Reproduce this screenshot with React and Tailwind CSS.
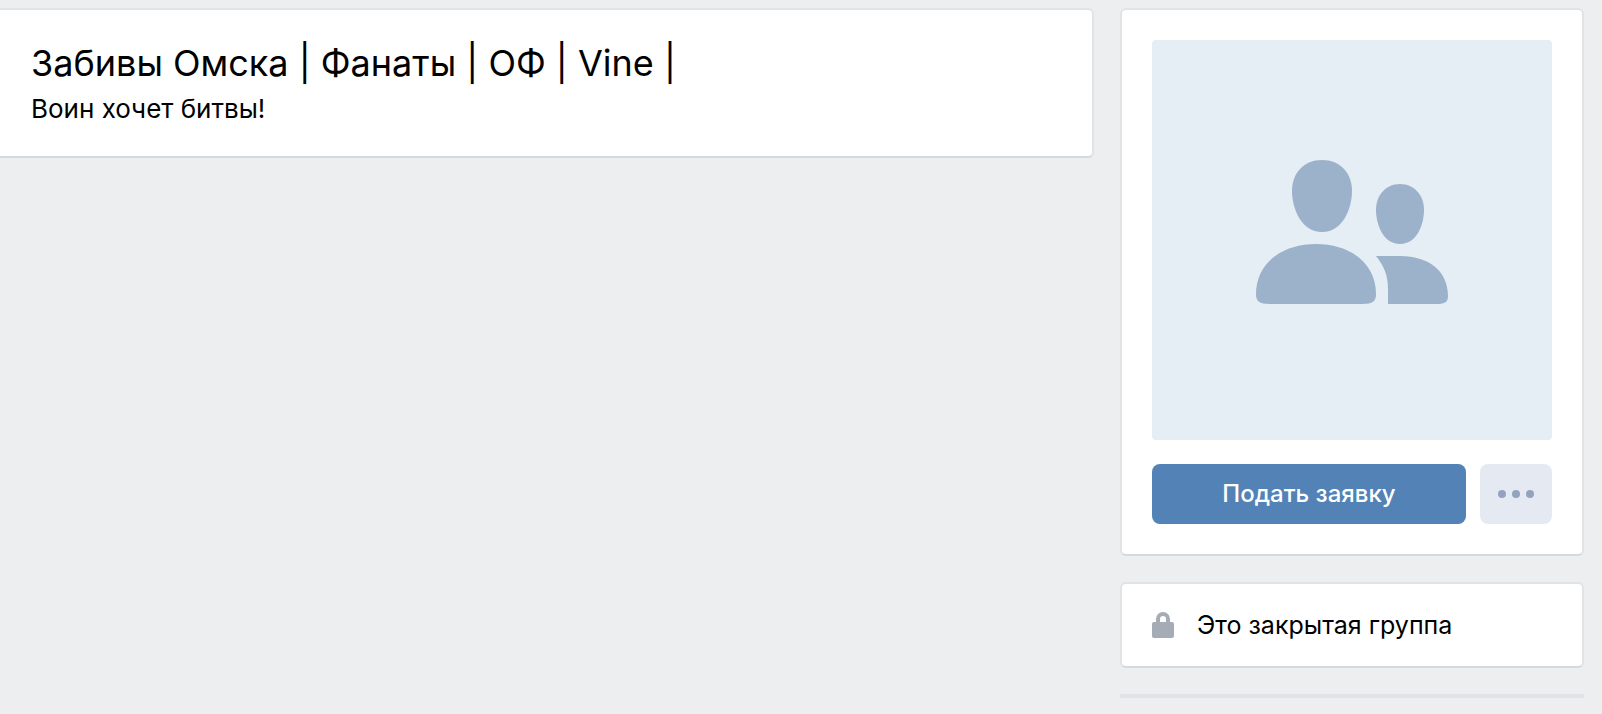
const CommunityIcon = () => (
  <svg className="w-48 h-36 mb-4" viewBox="0 0 192 144" fill="#9cb1ca" aria-hidden="true">
    <path d="M66 0C84 0 96 13 96 31C96 48 87 72 66 72C45 72 36 48 36 31C36 13 48 0 66 0Z" />
    <path d="M60 84C95 84 120 104 120 134C120 141 117 144 106 144H14C3 144 0 141 0 134C0 104 25 84 60 84Z" />
    <path d="M144 24C158 24 168 35 168 50C168 64 161 84 144 84C127 84 120 64 120 50C120 35 130 24 144 24Z" />
    <path d="M120 96H144C174 96 192 112 192 136C192 142 189 144 181 144H132V130C132 115 128 106 120 96Z" />
  </svg>
);

const LockIcon = () => (
  <svg className="w-[22px] h-[26px] shrink-0" viewBox="0 0 22 26" aria-hidden="true">
    <path d="M6 12V7a5 5 0 0 1 10 0v5" fill="none" stroke="#a5acb6" strokeWidth="4" />
    <rect y="10" width="22" height="16" rx="2" fill="#a5acb6" />
  </svg>
);

const Card = ({ className = '', children }) => (
  <section className={`bg-white border-2 border-[#e1e3e6] border-b-[#d5d8dc] ${className}`}>{children}</section>
);

const App = () => {
  const title = 'Забивы Омска | Фанаты | ОФ | Vine |';
  const status = 'Воин хочет битвы!';

  return (
    <div className="min-h-screen bg-[#edeef0] font-['Inter','Noto_Sans',sans-serif] text-black">
      <div className="flex items-start gap-[26px] pt-2 pr-[18px]">
        <main className="flex-1 min-w-0">
          <Card className="border-l-0 rounded-r-md px-[31px] pt-7 pb-[26px]">
            <h1 className="text-[36px] leading-[50px]">{title}</h1>
            <p className="text-[26px] leading-[42px]">{status}</p>
          </Card>
        </main>

        <aside className="w-[464px] shrink-0 flex flex-col gap-[26px]">
          <Card className="rounded-md p-[30px]">
            <div className="aspect-square rounded bg-[#e5edf5] flex items-center justify-center">
              <CommunityIcon />
            </div>
            <div className="flex gap-[14px] mt-6">
              <button className="flex-1 h-[60px] rounded-lg bg-[#5282b6] text-white text-2xl font-medium">
                Подать заявку
              </button>
              <button
                className="w-[72px] h-[60px] rounded-lg bg-[#e5eaf2] flex items-center justify-center gap-[6px]"
                aria-label="Ещё"
              >
                {[0, 1, 2].map((dot) => (
                  <span key={dot} className="w-2 h-2 rounded-full bg-[#93a3bf]" />
                ))}
              </button>
            </div>
          </Card>

          <Card className="rounded-md h-[86px] px-[30px] flex items-center gap-[23px]">
            <LockIcon />
            <p className="text-[25px] leading-9">Это закрытая группа</p>
          </Card>

          <div className="h-1 bg-[#e1e3e6]" />
        </aside>
      </div>
    </div>
  );
};

export default App;
